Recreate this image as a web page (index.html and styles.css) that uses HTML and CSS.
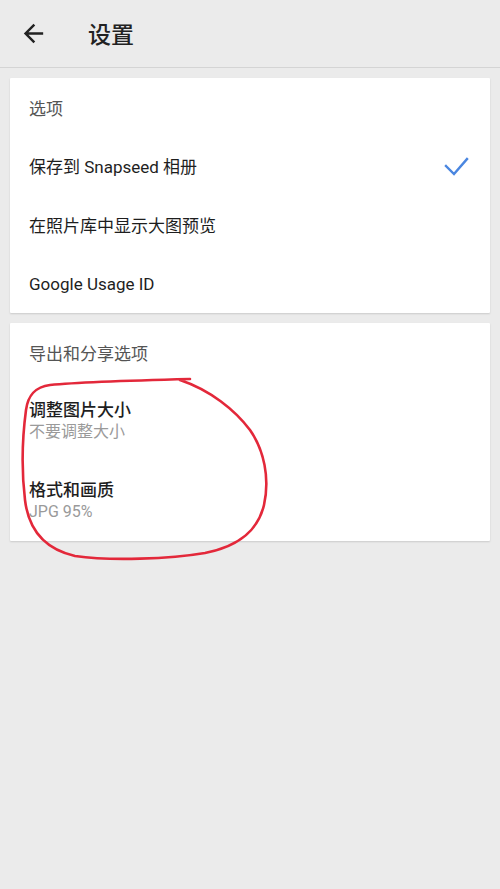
FILE: index.html
```
<!DOCTYPE html>
<html lang="zh-CN">
<head>
<meta charset="utf-8">
<title>设置</title>
<link rel="stylesheet" href="styles.css">
</head>
<body>
<div class="page">
  <header class="appbar">
    <svg class="back" viewBox="0 0 24 24" width="29" height="29"><path d="M20 11H7.83l5.59-5.59L12 4l-8 8 8 8 1.41-1.41L7.83 13H20v-2z" fill="#222"/></svg>
    <h1 class="title">设置</h1>
  </header>
  <main class="content">
    <section class="card">
      <div class="card-head">选项</div>
      <div class="row">
        <span class="label">保存到 Snapseed 相册</span>
        <svg class="check" viewBox="0 0 26 20" width="26" height="20"><polyline points="2,10 10,18 23,3" fill="none" stroke="#4a86e0" stroke-width="2.4" stroke-linecap="square"/></svg>
      </div>
      <div class="row"><span class="label">在照片库中显示大图预览</span></div>
      <div class="row"><span class="label">Google Usage ID</span></div>
    </section>
    <section class="card">
      <div class="card-head">导出和分享选项</div>
      <div class="row two">
        <span class="label">调整图片大小</span>
        <span class="sub">不要调整大小</span>
      </div>
      <div class="row two">
        <span class="label">格式和画质</span>
        <span class="sub">JPG 95%</span>
      </div>
    </section>
  </main>
  <svg class="scribble" viewBox="0 0 500 889" width="500" height="889"><path d="M190,379 C150,380 80,382 50,385 C35,387 28,395 26,410 C22,440 22,475 25,500 C28,525 40,548 75,556 C110,561 170,559 205,553 C240,546 258,530 264,505 C270,478 264,450 250,430 C235,410 210,390 180,380" fill="none" stroke="#e3283a" stroke-width="2.6" stroke-linecap="round"/></svg>
</div>
</body>
</html>
```
FILE: styles.css
```
* { box-sizing: border-box; }
html, body { margin: 0; padding: 0; }
body {
  background: #ebebeb;
  font-family: "Roboto", "Noto Sans CJK SC", sans-serif;
  width: 500px;
  height: 889px;
  overflow: hidden;
}
.page { position: relative; width: 500px; height: 889px; }
.appbar {
  height: 68px;
  display: flex;
  align-items: center;
  background: #ebebeb;
  border-bottom: 1px solid #d4d4d4;
  padding-left: 19px;
  padding-bottom: 1px;
}
.back { display: block; }
.title {
  margin: 0 0 0 40px;
  font-size: 23px;
  font-weight: 500;
  color: #222;
}
.content {
  padding: 10px;
  display: flex;
  flex-direction: column;
  gap: 10px;
}
.card {
  background: #fff;
  box-shadow: 0 1px 2px rgba(0,0,0,0.14);
  border-radius: 1px;
}
.card-head {
  height: 58px;
  display: flex;
  align-items: center;
  padding: 0 19px;
  font-size: 17px;
  color: #555;
}
.row {
  height: 59px;
  display: flex;
  align-items: center;
  justify-content: space-between;
  padding: 0 20px 0 19px;
}
.label { font-size: 17px; color: #1e1e1e; }
.row.two {
  height: 80px;
  flex-direction: column;
  align-items: flex-start;
  justify-content: center;
}
.row.two .label { line-height: 21px; font-weight: 500; }
.sub { font-size: 16px; line-height: 22px; color: #9a9a9a; }
.check { display: block; }
.scribble {
  position: absolute;
  left: 0;
  top: 0;
  pointer-events: none;
}
```
